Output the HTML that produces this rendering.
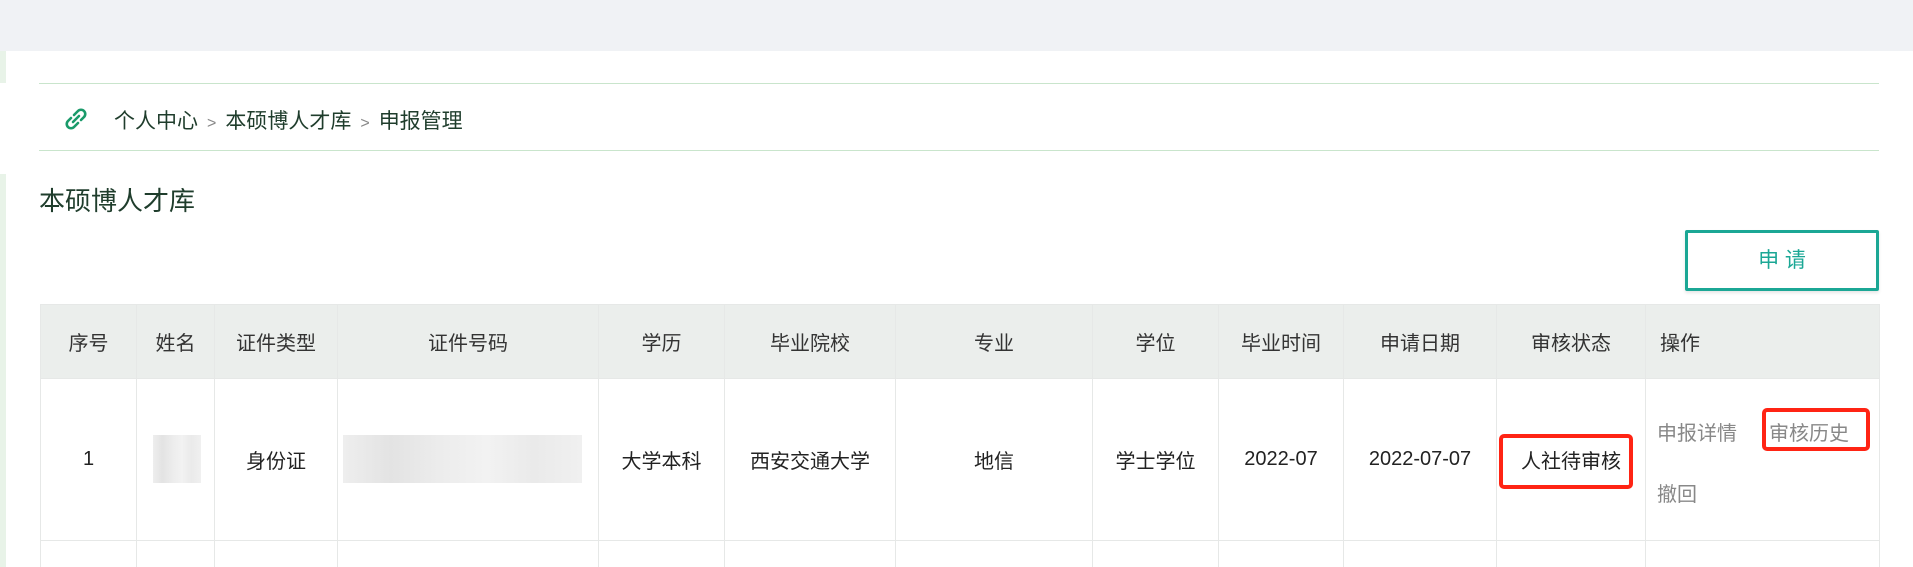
<!DOCTYPE html>
<html><head><meta charset="utf-8"><style>
html,body{margin:0;width:1913px;height:567px;overflow:hidden}
body{background:#fff;font-family:"Liberation Sans","Noto Sans CJK SC",sans-serif;position:relative}
.a{position:absolute}
.top{left:0;top:0;width:1913px;height:51px;background:#f0f2f5}
.strip{left:0;width:6px;background:#e8f3e8}
.line{left:39px;width:1840px;height:1px;background:#c9e5cc}
.bc{top:105px;left:114px;font-size:21px;color:#1f3d2c;white-space:nowrap}
.bc span{color:#888;font-size:16px;margin:0 9px}
.title{left:39px;top:181px;font-size:26px;color:#1f3d2c}
.btn{left:1685px;top:230px;width:188px;height:55px;border:3px solid #1ba795;border-radius:2px;color:#1ba795;font-size:21px;text-align:center;line-height:55px;box-shadow:0 2px 3px rgba(0,0,0,.1)}
table{position:absolute;left:40px;top:304px;border-collapse:collapse;font-size:20px;color:#222;table-layout:fixed;width:1839px}
td,th{border:1px solid #e6e8e7;text-align:center;padding:0;font-weight:normal;overflow:hidden}
th{background:#ebeeec;height:73px;color:#333}
td{height:161px}
.rb{border:4px solid #ff2414;border-radius:5px;position:absolute}
.blur{background:linear-gradient(90deg,#eee,#e3e3e3,#ececec,#f2f2f2,#eaeaea,#f0f0f0);position:absolute}
</style></head><body>
<div class="a top"></div>
<div class="a strip" style="top:51px;height:32px"></div>
<div class="a strip" style="top:174px;height:393px"></div>
<div class="a line" style="top:83px"></div>
<div class="a line" style="top:150px"></div>
<svg class="a" style="left:63px;top:105px" width="26" height="28" viewBox="0 0 26 28" fill="none" stroke="#1a9a6a" stroke-width="2.6" stroke-linecap="round"><path d="M11 10l4-4a4 4 0 0 1 6 6l-3 3"/><path d="M15 18l-4 4a4 4 0 0 1-6-6l3-3"/><path d="M10 17l6-6"/></svg>
<div class="a bc">个人中心<span>&gt;</span>本硕博人才库<span>&gt;</span>申报管理</div>
<div class="a title">本硕博人才库</div>
<div class="a btn">申 请</div>
<table>
<colgroup><col style="width:96px"><col style="width:78px"><col style="width:123px"><col style="width:261px"><col style="width:126px"><col style="width:171px"><col style="width:197px"><col style="width:126px"><col style="width:125px"><col style="width:153px"><col style="width:149px"><col style="width:234px"></colgroup>
<tr><th>序号</th><th>姓名</th><th>证件类型</th><th>证件号码</th><th>学历</th><th>毕业院校</th><th>专业</th><th>学位</th><th>毕业时间</th><th>申请日期</th><th>审核状态</th><th style="text-align:left;padding-left:14px">操作</th></tr>
<tr><td>1</td><td></td><td>身份证</td><td></td><td>大学本科</td><td>西安交通大学</td><td>地信</td><td>学士学位</td><td>2022-07</td><td>2022-07-07</td><td>人社待审核</td><td></td></tr>
<tr><td style="height:30px"></td><td></td><td></td><td></td><td></td><td></td><td></td><td></td><td></td><td></td><td></td><td></td></tr>
</table>
<div class="blur" style="left:153px;top:435px;width:48px;height:48px"></div>
<div class="blur" style="left:343px;top:435px;width:239px;height:48px"></div>
<div class="a" style="left:1657px;top:417px;font-size:20px;color:#888">申报详情</div>
<div class="a" style="left:1769px;top:417px;font-size:20px;color:#888">审核历史</div>
<div class="a" style="left:1657px;top:478px;font-size:20px;color:#888">撤回</div>
<div class="rb" style="left:1762px;top:408px;width:100px;height:35px"></div>
<div class="rb" style="left:1499px;top:434px;width:126px;height:47px"></div>
</body></html>
